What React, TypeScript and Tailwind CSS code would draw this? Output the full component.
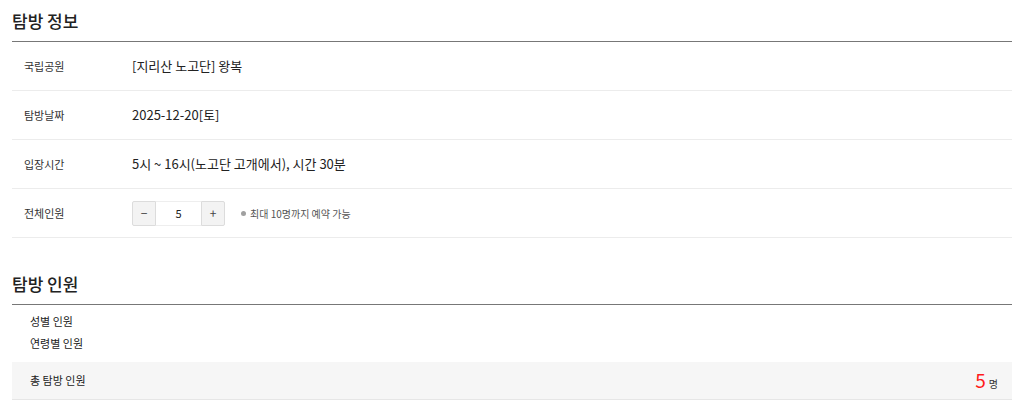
import { useState } from "react";

const font = {
  fontFamily: '"Noto Sans CJK KR", "Noto Sans", sans-serif',
};

function InfoRow({ label, children }: { label: string; children: React.ReactNode }) {
  return (
    <div className="flex h-[49px] items-center border-b border-[#ececec]">
      <div className="w-[120px] pl-3 text-[11px] text-[#333]">{label}</div>
      <div className="flex items-center text-[13px] text-[#222]">{children}</div>
    </div>
  );
}

export default function App() {
  const [count, setCount] = useState(5);

  return (
    <div className="min-h-[408px] bg-white px-3 pt-[5px]" style={font}>
      <section>
        <h2 className="h-[36px] pt-[3px] text-[17px] font-medium text-[#222]">탐방 정보</h2>
        <div className="border-t border-[#777]">
          <InfoRow label="국립공원">[지리산 노고단] 왕복</InfoRow>
          <InfoRow label="탐방날짜">2025-12-20[토]</InfoRow>
          <InfoRow label="입장시간">5시 ~ 16시(노고단 고개에서), 시간 30분</InfoRow>
          <InfoRow label="전체인원">
            <div className="flex h-[25px]">
              <button
                type="button"
                onClick={() => setCount((c) => Math.max(1, c - 1))}
                className="w-[24px] rounded-l-[2px] border border-[#dcdcdc] bg-[#f3f3f3] text-[12px] text-[#444]"
              >
                −
              </button>
              <div className="flex w-[45px] items-center justify-center border-y border-[#eeeeee] bg-white text-[11px] text-[#222]">
                {count}
              </div>
              <button
                type="button"
                onClick={() => setCount((c) => Math.min(10, c + 1))}
                className="w-[24px] rounded-r-[2px] border border-[#dcdcdc] bg-[#f3f3f3] text-[12px] text-[#444]"
              >
                +
              </button>
            </div>
            <span className="ml-[16px] flex items-center gap-[4px] text-[10px] text-[#555]">
              <span className="h-[5px] w-[5px] rounded-full bg-[#a0a0a0]" />
              최대 10명까지 예약 가능
            </span>
          </InfoRow>
        </div>
      </section>

      <section className="mt-[30px]">
        <h2 className="h-[36px] pt-[3px] text-[17px] font-medium text-[#222]">탐방 인원</h2>
        <div className="border-t border-[#777]">
          <div className="flex flex-col gap-[5px] pl-[18px] pt-[8px] pb-[11px] text-[11px] text-[#222]">
            <div>성별 인원</div>
            <div>연령별 인원</div>
          </div>
          <div className="flex h-[38px] items-center justify-between border-b border-[#e6e6e6] bg-[#f6f6f6] pl-[18px] pr-[14px]">
            <span className="text-[11px] text-[#222]">총 탐방 인원</span>
            <span className="flex items-baseline gap-[3px]">
              <span className="text-[19px] leading-none text-[#ff1a1a]">{count}</span>
              <span className="text-[10px] text-[#333]">명</span>
            </span>
          </div>
        </div>
      </section>
    </div>
  );
}
